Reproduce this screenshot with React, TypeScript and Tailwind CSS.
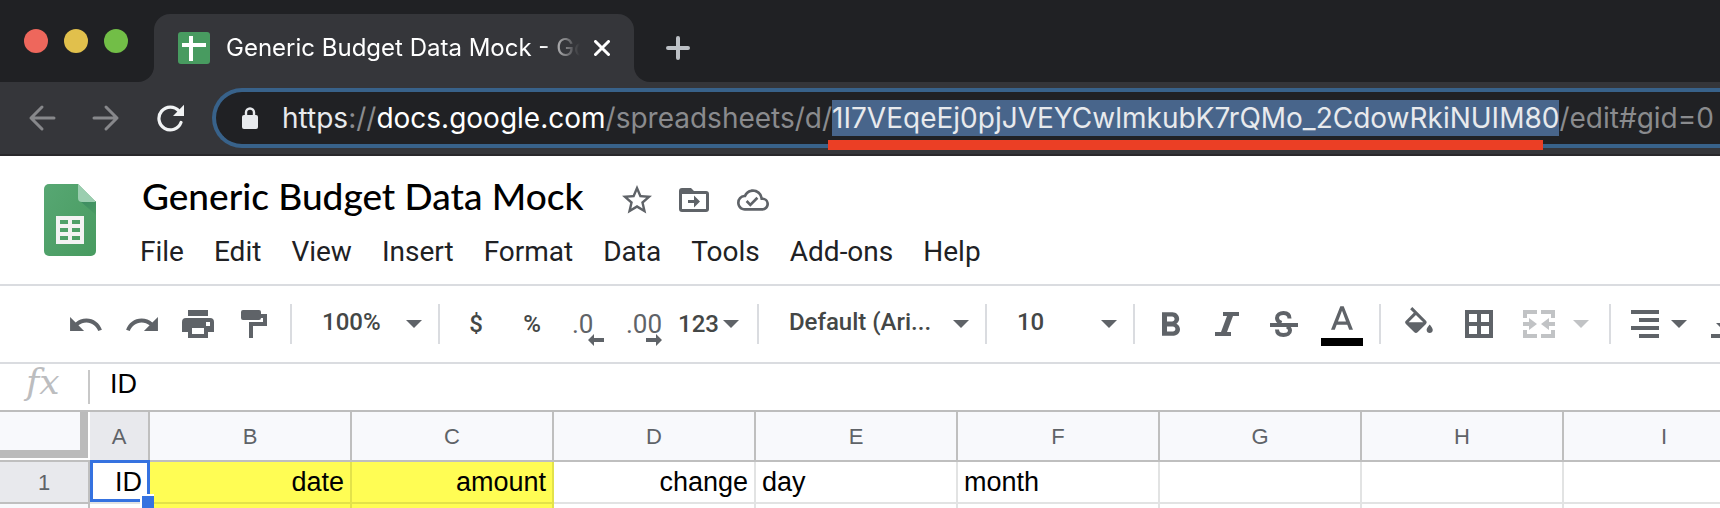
import React from "react";
import { MdStarBorder, MdOutlineCloudDone } from "react-icons/md";

type GlyphProps = {
  box: string;
  className: string;
  d: string;
};

function Glyph({ box, className, d }: GlyphProps) {
  return (
    <svg viewBox={box} className={className} fill="currentColor" fillRule="evenodd" aria-hidden="true">
      <path d={d} />
    </svg>
  );
}

function Caret({ className = "" }: { className?: string }) {
  return (
    <svg viewBox="0 0 16 8" className={"h-2 w-4 shrink-0 " + className} fill="currentColor" aria-hidden="true">
      <path d="M0 0h16L8 8z" />
    </svg>
  );
}

function Separator({ className = "" }: { className?: string }) {
  return <span className={"h-10 w-0.5 shrink-0 bg-[#dadce0] " + className} />;
}

function ToolButton({ label, width = "w-14", children }: { label: string; width?: string; children: React.ReactNode }) {
  return (
    <button type="button" aria-label={label} className={"flex h-12 shrink-0 items-center justify-center " + width}>
      {children}
    </button>
  );
}

function ToolSelect({ label, value, className }: { label: string; value: string; className: string }) {
  return (
    <div className={"relative flex h-12 shrink-0 items-center " + className}>
      <select
        aria-label={label}
        className="h-full w-full appearance-none bg-transparent pb-1 pl-[30px] font-medium text-[#444746] outline-none"
      >
        <option>{value}</option>
      </select>
      <Caret className="pointer-events-none absolute right-4" />
    </div>
  );
}

function BrowserTabs() {
  return (
    <div className="flex h-[82px] bg-[#35363a]">
      <div className="flex w-[154px] shrink-0 gap-4 rounded-br-2xl bg-[#202124] pt-[29px] pl-6">
        <button type="button" aria-label="Close window" className="size-6 rounded-full bg-[#ee675c]" />
        <button type="button" aria-label="Minimize window" className="size-6 rounded-full bg-[#e1c04c]" />
        <button type="button" aria-label="Zoom window" className="size-6 rounded-full bg-[#72be47]" />
      </div>
      <div className="w-[480px] shrink-0 bg-[#202124] pt-3.5">
        <div className="flex h-full items-center rounded-t-2xl bg-[#35363a] px-6">
          <svg viewBox="0 0 32 32" className="size-8 shrink-0" aria-hidden="true">
            <rect width="32" height="32" rx="3" fill="#489b60" />
            <path d="M4 11h7V4h4v7h13v4H15v14h-4V15H4z" fill="#fff" />
          </svg>
          <span className="ml-4 flex-1 text-2xl whitespace-nowrap text-white [mask-image:linear-gradient(to_right,#000_calc(100%-52px),transparent_calc(100%-14px))]">
            Generic Budget Data Mock - Go
          </span>
          <button type="button" aria-label="Close tab" className="text-white">
            <svg viewBox="0 0 16 16" className="size-4" fill="none" stroke="currentColor" strokeWidth="3" strokeLinecap="round">
              <path d="M1.5 1.5l13 13M14.5 1.5l-13 13" />
            </svg>
          </button>
        </div>
      </div>
      <div className="flex-1 rounded-bl-2xl bg-[#202124] pt-9 pl-8">
        <button type="button" aria-label="New tab" className="block text-[#bdc1c6]">
          <svg viewBox="0 0 24 24" className="size-6" fill="none" stroke="currentColor" strokeWidth="4" strokeLinecap="round">
            <path d="M12 2v20M2 12h20" />
          </svg>
        </button>
      </div>
    </div>
  );
}

function AddressBar() {
  return (
    <div className="flex h-[74px] items-start overflow-hidden border-b-2 border-[#29282b] bg-[#35363a] pt-1.5">
      <div className="flex h-[60px] w-[212px] shrink-0 items-center pl-7">
        <button type="button" aria-label="Back" className="text-[#87888b]">
          <svg viewBox="0 0 28 28" className="size-7" fill="none" stroke="currentColor" strokeWidth="3" strokeLinecap="round" strokeLinejoin="round">
            <path d="M26 14H3M14 3L3 14l11 11" />
          </svg>
        </button>
        <button type="button" aria-label="Forward" className="ml-9 text-[#87888b]">
          <svg viewBox="0 0 28 28" className="size-7" fill="none" stroke="currentColor" strokeWidth="3" strokeLinecap="round" strokeLinejoin="round">
            <path d="M2 14h23M14 3l11 11-11 11" />
          </svg>
        </button>
        <button type="button" aria-label="Reload" className="ml-9 text-[#f1f3f4]">
          <svg viewBox="0 0 28 28" className="size-7" fill="none" stroke="currentColor" strokeWidth="3.2" strokeLinecap="round">
            <path d="M25 18.500A11.400 11.400 0 1 1 23 7" />
            <path d="M28 .8V12H17z" fill="currentColor" stroke="none" />
          </svg>
        </button>
      </div>
      <div className="flex h-[60px] flex-1 items-center rounded-l-full border-4 border-r-0 border-[#38628a] bg-[#202124] pl-[26px]">
        <svg viewBox="0 0 16 22" className="h-[22px] w-4 shrink-0" aria-hidden="true">
          <path d="M4 9V5.500a4 4 0 0 1 8 0V9" fill="none" stroke="#e8eaed" strokeWidth="2.400" />
          <rect y="8" width="16" height="14" rx="2" fill="#e8eaed" />
        </svg>
        <div
          role="textbox"
          aria-label="Address"
          contentEditable
          suppressContentEditableWarning
          className="ml-6 text-[28px] leading-9 whitespace-nowrap text-[#8a8b8e] outline-none"
        >
          <span className="text-[#e8eaed]">https</span>://<span className="text-white">docs.google.com</span>/spreadsheets/d/
          <span className="relative inline-block bg-[#48658b] text-[#e8eaed]">
            1I7VEqeEj0pjJVEYCwlmkubK7rQMo_2CdowRkiNUIM80
            <span className="absolute top-10 right-4 -left-1 h-2.5 bg-[#eb3f25]" />
          </span>
          /edit#gid=0
        </div>
      </div>
    </div>
  );
}

const menus = ["File", "Edit", "View", "Insert", "Format", "Data", "Tools", "Add-ons", "Help"];

function DocumentHeader() {
  return (
    <header className="flex h-32 pl-11">
      <svg viewBox="0 0 52 72" className="mt-7 h-[72px] w-[52px] shrink-0" aria-label="Sheets home">
        <defs>
          <linearGradient id="sheet" x1="0" y1="0" x2="1" y2="1">
            <stop offset="0" stopColor="#57a773" />
            <stop offset="1" stopColor="#489b60" />
          </linearGradient>
          <linearGradient id="fold" x1="0" y1="0" x2="1" y2="1">
            <stop offset="0" stopColor="#3c8a62" />
            <stop offset="1" stopColor="#4a9c63" />
          </linearGradient>
        </defs>
        <path d="M5 0h29l18 18v49a5 5 0 0 1-5 5H5a5 5 0 0 1-5-5V5a5 5 0 0 1 5-5z" fill="url(#sheet)" />
        <path d="M36 17h16v14z" fill="url(#fold)" />
        <path d="M34 0l18 18H38a4 4 0 0 1-4-4z" fill="#9bceb0" />
        <path
          fillRule="evenodd"
          fill="#f3f3f3"
          d="M12 32h28v28H12zM16 36v4h8v-4zM28 36v4h8v-4zM16 44v4h8v-4zM28 44v4h8v-4zM16 52v4h8v-4zM28 52v4h8v-4z"
        />
      </svg>
      <div className="pt-5 pl-[44px]">
        <div className="flex h-12 items-center pl-0.5 text-[#5f6368]">
          <h1 className="pb-2 font-[Lato,sans-serif] text-[37px] leading-10 font-medium whitespace-nowrap text-black">
            Generic Budget Data Mock
          </h1>
          <button type="button" aria-label="Star" className="ml-9">
            <MdStarBorder className="size-9" />
          </button>
          <button type="button" aria-label="Move" className="ml-6">
            <Glyph
              box="0 0 30 24"
              className="h-6 w-[30px]"
              d="M3 0h9l3 3h12a3 3 0 0 1 3 3v15a3 3 0 0 1-3 3H3a3 3 0 0 1-3-3V3a3 3 0 0 1 3-3zM3 6v15h24V6zM9 12h6V7.500l6 6-6 6V15H9z"
            />
          </button>
          <button type="button" aria-label="Saved to Drive" className="ml-7">
            <MdOutlineCloudDone className="size-8" />
          </button>
        </div>
        <nav className="flex gap-[30px] pt-2.5 font-[Roboto,sans-serif] text-[28px] leading-9 text-[#202124]">
          {menus.map((m) => (
            <button type="button" key={m}>
              {m}
            </button>
          ))}
        </nav>
      </div>
    </header>
  );
}

function Toolbar() {
  return (
    <div
      role="toolbar"
      aria-label="Formatting"
      className="flex h-20 items-center overflow-hidden border-y-2 border-[#dadce0] pl-[58px] font-[Roboto,sans-serif] text-2xl font-medium text-[#5f6368]"
    >
      <ToolButton label="Undo">
        <Glyph box="2 7 20.5 9" className="h-3.5 w-8" d="M12.500 8c-2.650 0-5.050.990-6.900 2.600L2 7v9h9l-3.620-3.620c1.390-1.160 3.160-1.880 5.120-1.880 3.540 0 6.550 2.310 7.600 5.500l2.370-.780C21.080 11.030 17.150 8 12.500 8z" />
      </ToolButton>
      <ToolButton label="Redo">
        <Glyph box="1.5 7 20.5 9" className="h-3.5 w-8" d="M18.400 10.600C16.550 8.990 14.150 8 11.500 8c-4.650 0-8.580 3.030-9.960 7.220L3.900 16c1.050-3.190 4.050-5.500 7.600-5.500 1.950 0 3.730.720 5.120 1.880L13 16h9V7l-3.600 3.600z" />
      </ToolButton>
      <ToolButton label="Print">
        <Glyph box="0 0 16 14" className="h-7 w-8" d="M3 0h10v3H3zM2 4h12a2 2 0 0 1 2 2v5h-3v3H3v-3H0V6a2 2 0 0 1 2-2zM5 9v3h6V9zM12 6v2h2V6z" />
      </ToolButton>
      <ToolButton label="Paint format">
        <Glyph box="0 0 13 14" className="h-7 w-[26px]" d="M1 0h8a1 1 0 0 1 1 1v1h3v6H6v6H4V6h7V4h-1a1 1 0 0 1-1 1H1a1 1 0 0 1-1-1V1a1 1 0 0 1 1-1z" />
      </ToolButton>
      <Separator className="ml-2" />
      <ToolSelect label="Zoom" value="100%" className="w-[146px]" />
      <Separator />
      <div className="flex pl-2 text-[#444746]">
        <ToolButton label="Format as currency">$</ToolButton>
        <ToolButton label="Format as percent">%</ToolButton>
      </div>
      <ToolButton label="Decrease decimal places">
        <span className="flex w-8 flex-col pt-3 text-left text-[26px] leading-5 font-normal">
          .0
          <Glyph box="0 0 16 12" className="h-3 w-4 self-end" d="M0 6l6-6v4h10v4H6v4z" />
        </span>
      </ToolButton>
      <ToolButton label="Increase decimal places">
        <span className="flex w-9 flex-col pt-3 text-left text-[26px] leading-5 font-normal">
          .00
          <Glyph box="0 0 16 12" className="h-3 w-4 self-end" d="M16 6l-6-6v4H0v4h10v4z" />
        </span>
      </ToolButton>
      <button type="button" className="flex shrink-0 items-center gap-1 pr-[18px] pl-1.5">
        <span className="text-[#444746]">123</span>
        <Caret />
      </button>
      <Separator />
      <ToolSelect label="Font" value="Default (Ari..." className="w-[226px]" />
      <Separator />
      <ToolSelect label="Font size" value="10" className="w-[146px]" />
      <Separator className="mr-2" />
      <ToolButton label="Bold">
        <Glyph box="7 4 10.75 14" className="h-6 w-[18px]" d="M15.600 10.790c.970-.670 1.650-1.770 1.650-2.790 0-2.260-1.750-4-4-4H7v14h7.040c2.090 0 3.710-1.700 3.710-3.790 0-1.520-.860-2.820-2.150-3.420zM10 6.500h3c.830 0 1.500.670 1.500 1.500s-.670 1.500-1.500 1.500h-3v-3zm3.500 9H10v-3h3.500c.830 0 1.500.670 1.500 1.500s-.670 1.500-1.500 1.500z" />
      </ToolButton>
      <ToolButton label="Italic">
        <Glyph box="0 0 24 24" className="size-6" d="M8 0h16v4h-6l-6 16h4v4H0v-4h6l6-16H8z" />
      </ToolButton>
      <ToolButton label="Strikethrough" width="w-[58px]">
        <svg viewBox="0 0 28 26" className="h-[26px] w-7" fill="none" stroke="currentColor" strokeWidth="4" aria-hidden="true">
          <path d="M0 14h28" />
          <path d="M19.500 7.500C19.500 3.500 17 2 13.500 2S7 4 7 7c0 2.500 1.500 4 4.500 5" />
          <path d="M17 15.500c2 1 3 2 3 4 0 3-3 4.500-6.500 4.500S7 22.500 7 18.500" />
        </svg>
      </ToolButton>
      <ToolButton label="Text color" width="w-[58px]">
        <span className="flex flex-col items-center gap-2 pt-1">
          <Glyph box="5.5 3 13 14" className="h-6 w-[22px]" d="M11 3L5.500 17h2.250l1.120-3h6.250l1.120 3h2.250L13 3h-2zm-1.380 9L12 5.670 14.380 12H9.620z" />
          <span className="h-2 w-[42px] bg-black" />
        </span>
      </ToolButton>
      <Separator className="mx-2" />
      <ToolButton label="Fill color" width="w-[60px]">
        <Glyph box="3 0 18 17" className="mb-2 h-[26px] w-7" d="M16.560 8.940L7.620 0 6.210 1.410l2.380 2.380-5.150 5.150a1.490 1.490 0 0 0 0 2.120l5.500 5.500c.290.290.680.440 1.060.440s.770-.150 1.060-.440l5.500-5.500c.590-.580.590-1.530 0-2.120zM5.210 10L10 5.210 14.790 10H5.210zM19 11.500s-2 2.170-2 3.500c0 1.100.900 2 2 2s2-.900 2-2c0-1.330-2-3.500-2-3.500z" />
      </ToolButton>
      <ToolButton label="Borders" width="w-[60px]">
        <Glyph box="0 0 14 14" className="size-7" d="M0 0h14v14H0zM2 2v4h4V2zM8 2v4h4V2zM2 8v4h4V8zM8 8v4h4V8z" />
      </ToolButton>
      <div className="flex shrink-0 items-center text-[#c1c3c5]">
        <ToolButton label="Merge cells" width="w-[60px]">
          <Glyph box="0 0 16 14" className="h-7 w-8" d="M0 0h7v2H2v2H0zM16 0H9v2h5v2h2zM0 14h7v-2H2v-2H0zM16 14H9v-2h5v-2h2zM0 6h3V4l4 3-4 3V8H0zM16 6h-3V4L9 7l4 3V8h3z" />
        </ToolButton>
        <Caret className="ml-1" />
      </div>
      <Separator className="mx-5" />
      <button type="button" aria-label="Horizontal align" className="flex shrink-0 items-center gap-3">
        <Glyph box="0 0 14 14" className="size-7" d="M0 0h14v2H0zM4 4h10v2H4zM0 8h14v2H0zM4 12h10v2H4z" />
        <Caret />
      </button>
      <button type="button" aria-label="Vertical align" className="ml-6 flex shrink-0 items-center gap-3">
        <Glyph box="0 0 14 14" className="size-7" d="M0 12h14v2H0zM2.500 6.500H6V0h2v6.500h3.500L7 11z" />
        <Caret />
      </button>
    </div>
  );
}

function FormulaBar() {
  return (
    <div className="flex h-12 items-start border-b-2 border-[#bdbdbd]">
      <label htmlFor="formula" className="w-[88px] shrink-0 pl-[26px] font-[DejaVu_Serif,serif] text-[36px] leading-9 text-[#bcbdbf] italic">
        fx
      </label>
      <span className="mt-1.5 h-[34px] w-0.5 shrink-0 bg-[#c8c8c8]" />
      <input
        id="formula"
        defaultValue="ID"
        className="ml-5 h-10 flex-1 font-[Liberation_Sans,sans-serif] text-[27px] text-black outline-none"
      />
    </div>
  );
}

type Cell = { text: string; right?: boolean; fill?: boolean };

const columns = ["A", "B", "C", "D", "E", "F", "G", "H", "I"];
const rowOne: Cell[] = [
  { text: "ID", right: true },
  { text: "date", right: true, fill: true },
  { text: "amount", right: true, fill: true },
  { text: "change", right: true },
  { text: "day" },
  { text: "month" },
  { text: "" },
  { text: "" },
  { text: "" },
];

function Grid() {
  return (
    <table className="w-[1766px] table-fixed border-separate border-spacing-0 font-[Liberation_Sans,sans-serif]">
      <colgroup>
        <col className="w-[90px]" />
        <col className="w-[60px]" />
        {columns.slice(1).map((c) => (
          <col key={c} className="w-[202px]" />
        ))}
      </colgroup>
      <thead>
        <tr className="h-[50px] text-[22px] text-[#5f6368]">
          <td className="border-b-2 border-[#bfbfbf] bg-white p-0 align-top">
            <div className="h-[46px] w-[88px] border-r-8 border-b-8 border-[#bbb] bg-[#f8f9fc]" />
          </td>
          {columns.map((c) => (
            <th
              key={c}
              scope="col"
              className={
                "border-r-2 border-b-2 border-[#bfbfbf] p-0 font-normal " +
                (c === "A" ? "border-l-0 bg-[#e8e9ed]" : "bg-[#f8f9fc]")
              }
            >
              {c}
            </th>
          ))}
        </tr>
      </thead>
      <tbody>
        <tr className="h-[42px] text-[27px] text-black">
          <th scope="row" className="border-r-2 border-b-2 border-[#bfbfbf] bg-[#e8e9ed] p-0 text-[22px] font-normal text-[#5f6368]">
            1
          </th>
          {rowOne.map((cell, i) => (
            <td
              key={columns[i]}
              className={
                "relative border-r-2 border-b-2 px-1.5 py-0 leading-9 " +
                (cell.right ? "text-right " : "text-left ") +
                (cell.fill ? "border-[#e3e24a] bg-[#fffd54]" : "border-[#e2e3e3] bg-white")
              }
            >
              {cell.text}
              {i === 0 && (
                <>
                  <span className="absolute -top-0.5 -right-0.5 bottom-0 left-0 border-[3px] border-[#3572e0]" />
                  <span className="absolute -right-1.5 -bottom-1.5 z-10 size-3.5 border-t-2 border-l-2 border-white bg-[#3572e0]" />
                </>
              )}
            </td>
          ))}
        </tr>
        <tr className="h-[42px]">
          <th scope="row" className="border-r-2 border-b-2 border-[#bfbfbf] bg-[#f8f9fc] p-0" />
          {rowOne.map((cell, i) => (
            <td
              key={columns[i]}
              className={
                "border-r-2 border-b-2 p-0 " +
                (cell.fill ? "border-[#e3e24a] bg-[#fffd54]" : "border-[#e2e3e3] bg-white")
              }
            />
          ))}
        </tr>
      </tbody>
    </table>
  );
}

export default function App() {
  return (
    <div className="h-screen overflow-hidden bg-white font-[Inter,sans-serif]">
      <BrowserTabs />
      <AddressBar />
      <DocumentHeader />
      <Toolbar />
      <FormulaBar />
      <Grid />
    </div>
  );
}
